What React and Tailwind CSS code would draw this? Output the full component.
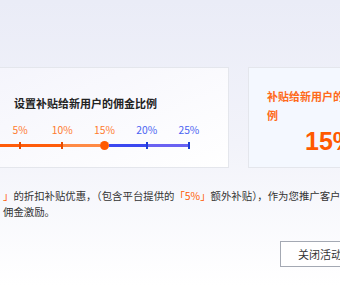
import React from "react";

const font = { fontFamily: '"Noto Sans CJK SC", "Liberation Sans", sans-serif' };

function Slider() {
  const labels = [
    { t: "5%", c: "text-[#ff7a2e]" },
    { t: "10%", c: "text-[#ff7a2e]" },
    { t: "15%", c: "text-[#ff7a2e]" },
    { t: "20%", c: "text-[#4a63f2]" },
    { t: "25%", c: "text-[#4a63f2]" },
  ];
  return (
    <div className="flex w-[200px] flex-col gap-[4px]">
      <div className="grid w-[211px] grid-cols-5">
        {labels.map((l) => (
          <span key={l.t} className={`text-center text-[10.3px] leading-[14px] ${l.c}`}>
            {l.t}
          </span>
        ))}
      </div>
      <div className="flex h-[9px] items-center">
        <div className="h-[3px] w-[20px] bg-[#ff5c0a]" />
        <div className="h-[7px] w-[2px] bg-[#e84c00]" />
        <div className="h-[3px] w-[40px] bg-[#ff5c0a]" />
        <div className="h-[7px] w-[2px] bg-[#e84c00]" />
        <div className="h-[3px] w-[37px] bg-[#ff8a45]" />
        <div className="h-[9px] w-[9px] shrink-0 rounded-full bg-[#ff5a00]" />
        <div className="h-[3px] w-[37px] bg-[#3b48f0]" />
        <div className="h-[7px] w-[2px] bg-[#1d3fd6]" />
        <div className="h-[3px] w-[40px] bg-[#6a62f2]" />
        <div className="h-[7px] w-[2px] bg-[#1d3fd6]" />
      </div>
    </div>
  );
}

export default function App() {
  return (
    <div
      className="h-[286px] w-[340px] overflow-hidden bg-gradient-to-b from-[#eaecf7] via-[#f2f3fa] to-white text-[#333]"
      style={font}
    >
      <div className="flex flex-col pt-[67px]">
        <div className="flex gap-[19px]">
          <div className="-ml-[2px] h-[101px] w-[231px] shrink-0 border border-[#e4e6ec] bg-gradient-to-br from-[#f5f5fc] to-white pl-[15px] pt-[27px]">
            <div className="text-[11px] font-bold leading-[16px] text-[#222]">
              设置补贴给新用户的佣金比例
            </div>
            <div className="-ml-[15px] mt-[12px]">
              <Slider />
            </div>
          </div>
          <div className="h-[101px] w-[150px] shrink-0 border border-[#e4e6ec] bg-[#f4f8ff] pl-[18px] pt-[19px]">
            <div className="w-[112px] text-[11px] font-bold leading-[19px] text-[#ff6a1a]">
              补贴给新用户的佣金比例
            </div>
            <div
              className="mt-[3px] pl-[38px] text-[25px] font-bold leading-[26px] text-[#ff5a00]"
              style={{ fontFamily: '"Liberation Sans", sans-serif' }}
            >
              15%
            </div>
          </div>
        </div>
        <div className="mt-[20px] w-[360px] pl-[3px] text-[10.4px] leading-[16px] text-[#333]">
          <div className="whitespace-nowrap">
            <span className="text-[#ff5a00]">」</span>的折扣补贴优惠，（包含平台提供的
            <span className="text-[#ff5a00]">「5%」</span>额外补贴），作为您推广客户的
          </div>
          <div className="whitespace-nowrap">佣金激励。</div>
        </div>
        <div className="mt-[21px] flex pl-[280px]">
          <button className="h-[26px] w-[90px] shrink-0 border border-[#a4a9b3] bg-white pl-[17px] text-left text-[11px] text-[#333]">
            关闭活动
          </button>
        </div>
      </div>
    </div>
  );
}
